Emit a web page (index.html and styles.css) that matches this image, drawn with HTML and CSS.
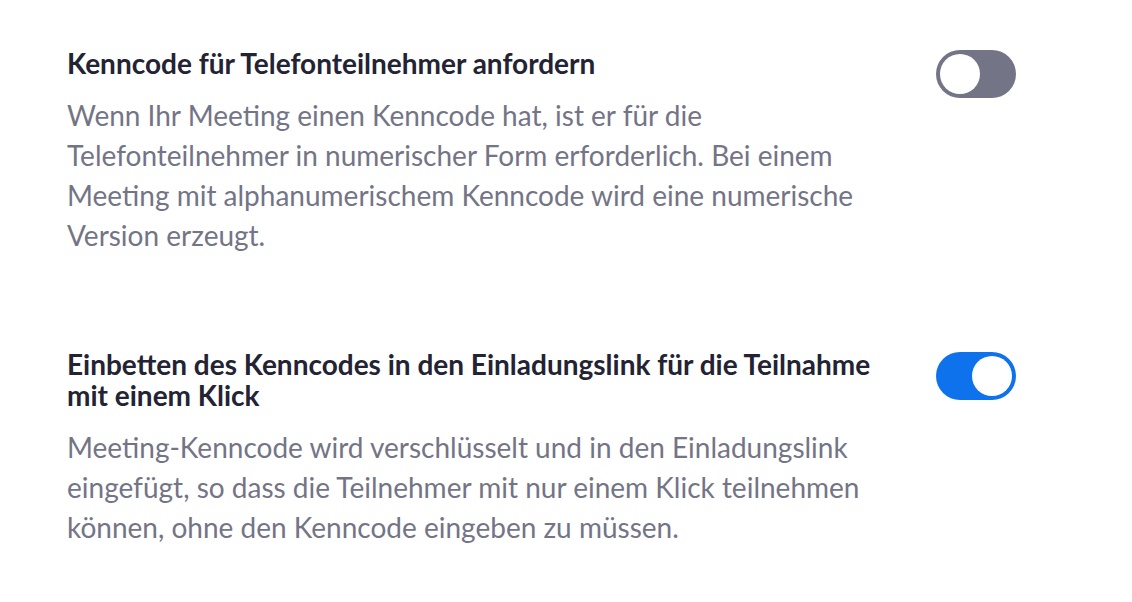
FILE: index.html
```html
<!DOCTYPE html>
<html>
	<head>
		<meta charset="UTF-8">
		<title>Kenncode Einstellungen</title>
		<link rel="stylesheet" href="styles.css">
	</head>
	<body>
		<div class="settings">
			<div class="setting">
				<div class="setting-text">
					<h3 class="setting-title">Kenncode für Telefonteilnehmer anfordern</h3>
					<p class="setting-desc">Wenn Ihr Meeting einen Kenncode hat, ist er für die Telefonteilnehmer in numerischer Form erforderlich. Bei einem Meeting mit alphanumerischem Kenncode wird eine numerische Version erzeugt.</p>
				</div>
				<div class="toggle"><span class="knob"></span></div>
			</div>
			<div class="setting">
				<div class="setting-text">
					<h3 class="setting-title">Einbetten des Kenncodes in den Einladungslink für die Teilnahme mit einem Klick</h3>
					<p class="setting-desc">Meeting-Kenncode wird verschlüsselt und in den Einladungslink eingefügt, so dass die Teilnehmer mit nur einem Klick teilnehmen können, ohne den Kenncode eingeben zu müssen.</p>
				</div>
				<div class="toggle on"><span class="knob"></span></div>
			</div>
		</div>
	</body>
</html>
```

FILE: styles.css
```css
*{
	margin: 0;
	padding: 0;
	box-sizing: border-box;
}
body{
	background: #fff;
	font-family: Lato, "Open Sans", sans-serif;
}
.settings{
	padding: 48px 116px 0 67px;
	display: flex;
	flex-direction: column;
	gap: 94px;
}
.setting{
	display: flex;
	align-items: flex-start;
	justify-content: space-between;
}
.setting-text{
	width: 810px;
}
.setting-title{
	font-size: 28px;
	line-height: 31px;
	font-weight: bold;
	color: #232333;
}
.setting-desc{
	margin-top: 16px;
	font-size: 28px;
	line-height: 40px;
	color: #747487;
}
.toggle{
	width: 80px;
	height: 48px;
	border-radius: 24px;
	background: #747487;
	padding: 4px;
	display: flex;
	justify-content: flex-start;
	margin-top: 2px;
}
.toggle.on{
	background: #0e72ed;
	justify-content: flex-end;
	margin-top: 3px;
}
.knob{
	width: 40px;
	height: 40px;
	border-radius: 50%;
	background: #fff;
}
```
